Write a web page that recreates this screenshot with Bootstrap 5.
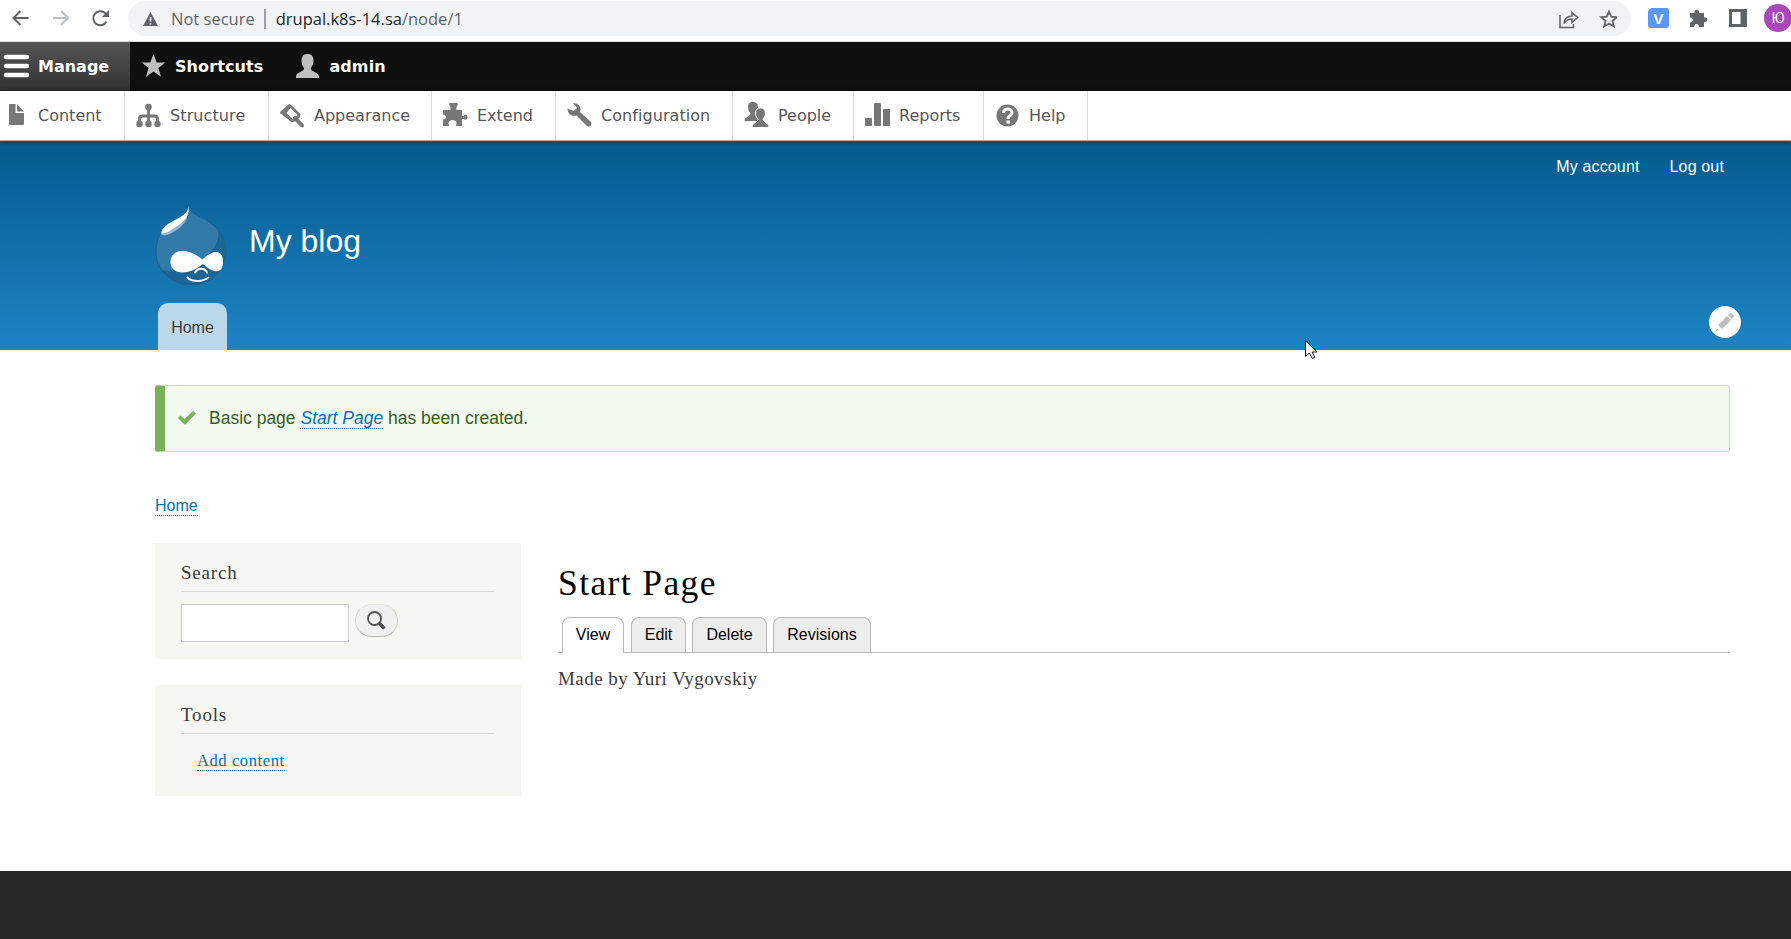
<!DOCTYPE html>
<html lang="en">
<head>
<meta charset="utf-8">
<title>Start Page | My blog</title>
<link href="https://cdn.jsdelivr.net/npm/bootstrap@5.3.0/dist/css/bootstrap.min.css" rel="stylesheet">
<style>
body{font-family:"Liberation Sans",Arial,sans-serif;font-size:16px;color:#3b3b3b;background:#fff;height:939px;overflow:hidden;line-height:24px}
svg{display:block;flex:none}
.serif{font-family:"Liberation Serif",Georgia,serif}
.browser{height:41px;padding:0 0 5px 0;font-family:"Open Sans",sans-serif;font-size:16.5px;color:#5f6368}
.omni{height:35px;margin-top:1px;margin-left:16px;width:1503px;border-radius:18px;background:#f1f3f4;padding:0 14px}
.adminbar{height:50px;border-top:1px solid #ddd;background:#0f0f0f;color:#fff;font:bold 16px "DejaVu Sans",Verdana,sans-serif}
.adminbar a,.tray a{color:inherit;text-decoration:none;display:flex;align-items:center;height:100%;white-space:nowrap}
.adminbar a:not(.on){letter-spacing:.1px}
.adminbar .on{width:130px;background:linear-gradient(#555,#333)}
.tray{height:50px;border-bottom:1px solid #aaa;background:#fff;color:#565656;font:16px "DejaVu Sans",Verdana,sans-serif;position:relative;z-index:2;box-shadow:0 0 4px 1px rgba(0,0,0,.4)}
.tray a{border-right:1px solid #ddd}
.tray svg{margin-bottom:2px}
.adminbar svg{margin-bottom:1px}
.tray span,.adminbar span{display:block;line-height:20px}
.hero{height:209px;background:linear-gradient(#055a8e,#1d84c3);color:#fff;position:relative}
.wrap{margin-left:155px;width:1575px}
.account{height:50px;padding:2px 6px 0 0;gap:30px}
.account a{color:#fff;text-decoration:none;letter-spacing:.15px}
.homelink{width:69px;height:47px;border-radius:10px 10px 0 0;background:#bbd8eb;color:#333;text-decoration:none;text-shadow:0 1px #eee;margin-left:3px;padding-top:2px}
.sitename{font-size:32px;line-height:38px;margin-left:22px;padding-top:16px}
.pencil{position:absolute;left:1709px;top:165px}
.pointer{position:absolute;left:1304px;top:339px;z-index:5}
.status{height:67px;margin-top:35px;border:1px solid #c9e1bd;border-left:10px solid #77b259;border-radius:3px;background:#f3faef;color:#325e1c;font-size:17.5px;padding:0 0 2px 13px}
.dotlink{color:#0071b3;text-decoration:none;border-bottom:1px dotted #0071b3;line-height:18px;display:inline-block}
.status .dotlink{line-height:20px}
.crumb{margin-top:42px;height:49px}
.sidebar{width:366px;margin-right:37px}
.panel{background:#f6f6f2;padding:20px 27px 0 26px}
.panel h2{font-size:19px;line-height:20px;margin:0;height:29px;border-bottom:1px solid #d6d6d6;color:#3b3b3b;letter-spacing:.8px}
.search{width:168px;height:38px;border:1px solid #ccc;background:#fff;border-radius:0;padding:0}
.go{width:43px;height:33px;border:1px solid #d2d2d2;border-top-color:#e4e4e4;border-bottom-color:#b4b4b4;border-radius:17px;background:#f0f0f0;margin-left:6px;padding:0}
.pagetitle{font-size:35.5px;line-height:40px;color:#000;margin:20px 0 0;height:54px;letter-spacing:1.4px}
.tabbar{height:36px;border-bottom:1px solid #b8b8b8;padding-left:4px}
.tabbar a{height:35px;border:1px solid #b8b8b8;border-bottom:0;border-radius:8px 8px 0 0;background:#ededed;color:#000;text-decoration:none;display:flex;justify-content:center;padding-top:5px;margin-right:6px}
.tabbar a.current{height:36px;background:#fff;margin-right:7px}
.foot{height:68px;background:#292929}
</style>
</head>
<body>
<div class="d-flex flex-column">
<div class="browser d-flex align-items-center">
 <svg width="112" height="36" viewBox="0 0 112 36" fill="none" stroke="#5f6368" stroke-width="2"><path d="M28.500 18H14M20.500 11l-7 7 7 7"/><path d="M53 18h14.500M61 11l7 7-7 7" stroke="#bdc1c6"/><path d="M106.500 21.500a7 7 0 1 1-1.500-8.500l2 2"/><path d="M109 10v7h-7z" fill="#5f6368" stroke="none"/></svg>
 <div class="omni d-flex align-items-center">
  <svg width="17" height="16" viewBox="0 0 17 16"><path d="M8.500 1 16 15H1z" fill="#5f6368"/><path d="M8.500 6v4.500M8.500 12v1.600" stroke="#f1f3f4" stroke-width="1.600"/></svg>
  <span style="margin-left:12px">Not secure</span><span style="width:2px;height:20px;background:#9aa0a6;margin:0 10px 0 9px"></span><span><span class="text-dark">drupal.k8s-14.sa</span>/node/1</span>
  <svg class="ms-auto" width="58" height="20" viewBox="0 0 58 20" fill="none" stroke="#5f6368" stroke-width="1.500"><path d="M1 6v12.500h13.500V15M5 14.500c.5-5 3-7.500 8-7.500V3.500L18.500 8.500 13 13.500v-3.500c-3.500 0-6 1.500-8 4.500z"/><path d="m50 2.500 2.200 5.200 5.600.5-4.300 3.700 1.300 5.500-4.800-2.900-4.800 2.900 1.300-5.500-4.300-3.700 5.600-.5z" stroke-width="1.800"/></svg>
 </div>
 <svg width="160" height="36" viewBox="1631 0 160 36"><path d="M1651 8h15q3 0 3 3v14q0 3-3 3h-15q-3 0-3-3V11z" fill="#5b98f1"/><text x="1658.500" y="23.500" text-anchor="middle" font-family="Liberation Sans" font-weight="bold" font-size="15.500" fill="#fff">V</text><path d="M1690 13h4.500c-1-4.500 5.500-4.500 4.500 0h5v4.500c4.500-1 4.500 5 0 4.500V27h-5c0-4-5-4-5 0h-4v-4.500c4-.5 4-5 0-5z" fill="#5f6368"/><path d="M1729 9h18v18h-18z" fill="#5f6368"/><path d="M1732 12h8.500v12h-8.500z" fill="#fff"/><circle cx="1778" cy="18" r="14" fill="#ab47bc"/><text x="1778" y="23" text-anchor="middle" font-family="Roboto" font-size="14.500" fill="#fff">Ю</text></svg>
</div>
<nav class="adminbar d-flex">
 <a class="on" href="#"><svg width="38" height="26"><path d="M6 4h21M6 13h21M6 22h21" stroke="#fff" stroke-width="4.500" stroke-linecap="round"/></svg><span>Manage</span></a>
 <a href="#"><svg width="45" height="26" viewBox="0 0 45 26" fill="#bfbfbf"><path d="m23.500 1 3.200 8.400h8.500l-6.800 5.500 2.600 8.900-7.500-5.200-7.500 5.200 2.600-8.900-6.800-5.500h8.500z"/></svg><span>Shortcuts</span></a>
 <a href="#"><svg width="66" height="26" viewBox="0 0 66 26" fill="#bfbfbf"><path d="M44.500 1c4.200 0 6 2.700 6 6.500 0 3.500-1.200 5.500-2.800 7.500-1 3.500 8.300 4 8.300 8.500V25H33v-1.500c0-4.500 9-5 8-8.500-1.500-2-2.500-4-2.500-7.500 0-3.800 1.800-6.500 6-6.500z"/></svg><span>admin</span></a>
</nav>
<nav class="tray d-flex">
 <a href="#" style="width:125px"><svg width="38" height="26" viewBox="0 0 38 26" fill="#777"><path d="M10 2h5.500v9H24v11q0 1-1 1H10q-1 0-1-1V3q0-1 1-1zM17 2l7 7.500h-7z"/></svg><span>Content</span></a>
 <a href="#" style="width:144px;letter-spacing:.1px"><svg width="45" height="26" viewBox="0 0 45 26" fill="none" stroke="#777" stroke-width="2.800"><path d="M23.500 5v17M14.500 21v-4q0-3 3-3h12q3 0 3 3v4"/><g fill="#777" stroke="none"><circle cx="23.500" cy="5" r="3.300"/><circle cx="14.500" cy="22" r="3.200"/><circle cx="23.500" cy="22" r="3.200"/><circle cx="32.500" cy="22" r="3.200"/></g></svg><span>Structure</span></a>
 <a href="#" style="width:163px"><svg width="45" height="26" viewBox="0 0 45 26"><path d="M19.500 2.500q1-1 2 0l10 9.500-.5 3-5 4.500-3.500.5-11-8.500q-1-1 0-2z" fill="#777"/><path d="m21.500 6 7 7-4.500 4.500-6.500-6.500z" fill="#fff"/><path d="m26 16 7 7.500" stroke="#777" stroke-width="4" stroke-linecap="round"/></svg><span>Appearance</span></a>
 <a href="#" style="width:124px"><svg width="45" height="26" viewBox="0 0 45 26" fill="#777"><path d="M11 8h7.500V5q-3-4 0-4h6q3 0 0 4v3H30v5.500q1 1 2.500-.5c4-2 4 6 0 4.500q-1.500-1.500-2.500 0V24h-6q2-6-3.500-6t-3.500 6h-6v-6.500c4 0 4-4.500 0-5z"/></svg><span>Extend</span></a>
 <a href="#" style="width:177px;letter-spacing:.06px"><svg width="45" height="26" viewBox="0 0 45 26"><path d="M17 1c6 0 9 5 7 9l11 10c1.500 3-1.500 6-4 4L20.500 13.500c-5 1.500-9-2-9-7l6 2.500 3.500-3z" fill="#777"/></svg><span>Configuration</span></a>
 <a href="#" style="width:121px"><svg width="45" height="26" viewBox="0 0 45 26" fill="#777"><path d="M20 0c3.500 0 5 2 5 5s-1.500 5-2.500 6c0 3.500 6 3.500 6 8h-17c0-4.500 6-4.500 6-8C16 10 15 8 15 5s1.500-5 5-5z"/><path d="M27.500 6c3.500 0 5 2 5 5s-1.500 5-2.500 6c0 3.500 6 3.500 6 8.500H19c0-5 6-5 6-8.500-1-1-2.500-3-2.500-6s1.500-5 5-5z" stroke="#fff" stroke-width="1"/></svg><span>People</span></a>
 <a href="#" style="width:130px"><svg width="45" height="26" viewBox="0 0 45 26" fill="#777"><rect x="11" y="16" width="7" height="8" rx="1"/><rect x="20" y="1" width="7" height="23" rx="1"/><rect x="29" y="7" width="7" height="17" rx="1"/></svg><span>Reports</span></a>
 <a href="#" style="width:104px"><svg width="45" height="26" viewBox="0 0 45 26"><circle cx="23.500" cy="13.500" r="11" fill="#777"/><path d="M19.500 11c0-5.500 8.500-5 8.500-.5 0 3-4 3-4 6.500" fill="none" stroke="#fff" stroke-width="3"/><path d="M22.500 18.500h3.500v3h-3.500z" fill="#fff"/></svg><span>Help</span></a>
</nav>
<header class="hero">
 <div class="wrap">
  <div class="account d-flex justify-content-end align-items-center"><a href="#">My account</a><a href="#">Log out</a></div>
  <div class="d-flex" style="height:112px;padding-top:15px">
   <svg width="72" height="82" viewBox="0 0 72 82"><path d="M33.500 0c0 6-5 9-10 12C10 20 1 29 1 45c0 20 16 34 35 34s35-14 35-34c0-17-12-26-21-31C42 10 36 8 33.500 0z" fill="#1a6496" stroke="#245f86"/><path d="M33.500 1c0 6-5 9-10 12C10 20 1.500 29 1.500 45c0 8 2 14 6 19 29 5 60-20 55.500-40-4-4-8-7-13-10-8-4-14-6-16.500-13z" fill="#327aa9"/><path d="M32 9C24 14 6 20 6 28c3 5 22-5 26-16z" fill="#93b8cf"/><path d="M33.500 0c1 8-2 15-13 21-8 6-13 8-14 5 2-7 12-11 17-14 6-3 10-7 10-12z" fill="#fff"/><path d="M15.500 56c0-13 17-15 32-2.500C57 44 68 42 68 56c0 12-9 12-20 2-16 13-32.500 10-32.500-2z" fill="#fff"/><path d="M40 66.500c3-5 10-5 12 0M32.500 71.500c5 5 15 4.500 21 0" fill="none" stroke="#fff" stroke-width="2" stroke-linecap="round"/></svg>
   <div class="sitename">My blog</div>
  </div>
  <a class="homelink d-flex align-items-center justify-content-center" href="#">Home</a>
 </div>
 <svg class="pencil" width="32" height="32"><circle cx="16" cy="16" r="16" fill="#fff"/><path d="m9 19 9-9 4 4-9 9zM19 9l2-2q1-.5 4 3l-2 3zM8 22l2 2-3 1z" fill="#bebebe"/></svg>
</header>
<main class="wrap" style="height:521px">
 <div style="height:35px"></div>
 <div class="status d-flex align-items-center mt-0"><svg width="18" height="14"><path d="m0 7 2.500-2.500L6.500 8 15 0l3 2.500L7.500 13.500 6 13z" fill="#77b259"/></svg><span style="margin-left:13px">Basic page <em><a class="dotlink" href="#">Start Page</a></em> has been created.</span></div>
 <div class="crumb"><a class="dotlink" href="#">Home</a></div>
 <div class="d-flex">
  <aside class="sidebar serif">
   <section class="panel" style="height:116px"><h2>Search</h2><form class="d-flex" style="margin-top:12px"><input class="search" aria-label="Search"><button class="go d-flex justify-content-center align-items-center" type="button" aria-label="Go"><svg width="20" height="20" fill="none" stroke="#505050"><circle cx="7.500" cy="7.500" r="6.500" stroke-width="1.800"/><path d="m12 12 5.500 5.500" stroke-width="3.500"/></svg></button></form></section>
   <section class="panel" style="height:111px;margin-top:26px"><h2>Tools</h2><div style="padding:15px 0 0 16px"><a class="dotlink" href="#" style="font-size:16.500px;letter-spacing:.6px">Add content</a></div></section>
  </aside>
  <section class="flex-grow-1">
   <h1 class="pagetitle serif">Start Page</h1>
   <nav class="tabbar d-flex align-items-start"><a class="current" style="width:62px" href="#">View</a><a style="width:55px" href="#">Edit</a><a style="width:75px" href="#">Delete</a><a style="width:98px" href="#">Revisions</a></nav>
   <p class="serif m-0" style="font-size:19px;padding-top:14px;letter-spacing:.46px">Made by Yuri Vygovskiy</p>
  </section>
 </div>
</main>
<footer class="foot"></footer>
</div>
<svg class="pointer" width="14" height="21"><path d="M1.500 1.500v16l3.800-3.500 3 5.500 2.500-1.200-2.700-5.300h5z" fill="#fff" stroke="#112"/></svg>
<script src="https://cdn.jsdelivr.net/npm/bootstrap@5.3.0/dist/js/bootstrap.bundle.min.js"></script>
</body>
</html>
